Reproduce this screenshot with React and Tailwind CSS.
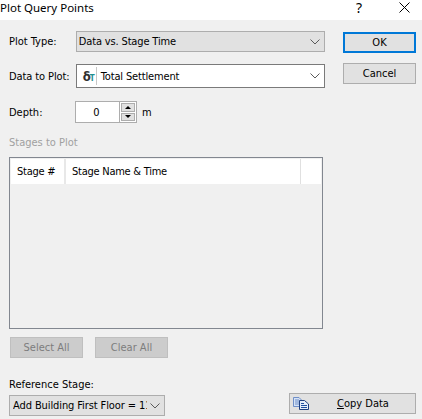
const sans = '"DejaVu Sans", "Noto Sans", sans-serif';
const title = '"Noto Sans", sans-serif';

function Chevron() {
  return (
    <svg width="10" height="6" viewBox="0 0 10 6" className="shrink-0">
      <path d="M0.5 0.5 L5 5 L9.5 0.5" fill="none" stroke="#5a5a5a" strokeWidth="1" />
    </svg>
  );
}

function Button({ children, className }) {
  return <div className={`flex items-center justify-center ${className}`}>{children}</div>;
}

function CopyIcon() {
  return (
    <svg width="16" height="13" viewBox="0 0 16 13" className="shrink-0">
      <path d="M0.5 0.5 H6 L8.5 3 V9.5 H0.5 Z" fill="#d5e2f6" stroke="#6f8fc8" />
      <path d="M2 3 H6 M2 5 H7 M2 7 H7" stroke="#6f8fc8" />
      <path d="M6.5 3.5 H11.5 L15.5 7 V12.5 H6.5 Z" fill="#e4edfa" stroke="#1f3f7f" />
      <path d="M8 6.5 H11 M8 8.5 H14 M8 10.5 H14" stroke="#1f4f9f" />
    </svg>
  );
}

export default function App() {
  return (
    <div className="w-[422px] h-[419px] overflow-hidden bg-[#f0f0f0] flex flex-col text-[11px] leading-[13px] font-stretch-condensed text-black" style={{ fontFamily: sans }}>
      <div className="h-5 bg-white flex items-start justify-between shrink-0">
        <span className="text-[11.5px] leading-[16px] font-stretch-normal" style={{ fontFamily: title }}>Plot Query Points</span>
        <div className="flex items-start">
          <span className="text-[14px] leading-[20px] -mt-[2px] mr-[37px] font-stretch-normal" style={{ fontFamily: title }}>?</span>
          <svg width="11" height="11" viewBox="0 0 11 11" className="mt-[2px] mr-[12px]">
            <path d="M0.5 0.5 L10.5 10.5 M10.5 0.5 L0.5 10.5" stroke="#000" strokeWidth="1" />
          </svg>
        </div>
      </div>

      <div className="flex-1 flex flex-col pl-[9px] pr-[6px]">
        <div className="flex">
          <div className="w-[316px] flex flex-col">
            <div className="flex items-center mt-[11px]">
              <span className="w-[67px]">Plot Type:</span>
              <div className="w-[250px] h-[21px] bg-[#e1e1e1] border border-[#adadad] flex items-center justify-between pl-[2px] pr-[4px]">
                <span className="tracking-[-0.15px]">Data vs. Stage Time</span>
                <Chevron />
              </div>
            </div>
            <div className="flex items-center mt-[12px]">
              <span className="w-[67px] whitespace-nowrap tracking-[-0.1px]">Data to Plot:</span>
              <div className="w-[250px] h-[24px] bg-white border border-[#7a7a7a] flex items-center justify-between pl-[6px] pr-[4px]">
                <div className="flex items-center">
                  <span className="text-[13px] font-bold text-[#303030] w-[7px]">δ</span>
                  <span className="text-[8px] font-bold text-[#1f8f8f] mt-[4px] w-[6px]">T</span>
                  <span className="w-px h-[18px] bg-[#c8c8c8] mr-[4px]" />
                  <span className="tracking-[-0.15px]">Total Settlement</span>
                </div>
                <Chevron />
              </div>
            </div>
            <div className="flex items-center mt-[13px]">
              <span className="w-[66px]">Depth:</span>
              <div className="w-[45px] h-[22px] bg-white border border-[#adadad] flex items-center justify-center pr-[2px]">0</div>
              <div className="w-[17px] h-[22px] border border-[#adadad] border-l-0 flex flex-col bg-white p-[1px] gap-[1px]">
                <div className="flex-1 bg-[#e1e1e1] border border-[#adadad] flex items-center justify-center">
                  <span className="w-0 h-0 border-x-[3px] border-x-transparent border-b-[3px] border-b-black" />
                </div>
                <div className="flex-1 bg-[#e1e1e1] border border-[#adadad] flex items-center justify-center">
                  <span className="w-0 h-0 border-x-[3px] border-x-transparent border-t-[3px] border-t-black" />
                </div>
              </div>
              <span className="ml-[5px]">m</span>
            </div>
          </div>
          <div className="ml-[18px] flex flex-col">
            <Button className="w-[73px] h-[21px] mt-[12px] bg-[#e1e1e1] border-2 border-[#0078d7]">OK</Button>
            <Button className="w-[73px] h-[21px] mt-[10px] bg-[#e1e1e1] border border-[#adadad]">Cancel</Button>
          </div>
        </div>

        <div className="mt-[13px] text-[#a0a0a0]">Stages to Plot</div>

        <div className="mt-[8px] w-[314px] h-[172px] border border-[#828790] p-[1px] flex flex-col">
          <div className="h-[25px] bg-white flex items-center tracking-[-0.25px]">
            <span className="w-[55px] pl-[6px] border-r-2 border-[#e8e8e8] h-full flex items-center">Stage #</span>
            <span className="flex-1 pl-[6px] border-r border-[#e0e0e0] h-full flex items-center">Stage Name &amp; Time</span>
            <span className="w-[20px]" />
          </div>
        </div>

        <div className="flex mt-[8px] ml-[1px] gap-[12px]">
          <Button className="w-[73px] h-[21px] bg-[#cccccc] border border-[#bfbfbf] text-[#7d7d7d]">Select All</Button>
          <Button className="w-[73px] h-[21px] bg-[#cccccc] border border-[#bfbfbf] text-[#7d7d7d]">Clear All</Button>
        </div>

        <div className="flex items-end justify-between mt-[20px]">
          <div className="flex flex-col">
            <span className="mb-[4px]">Reference Stage:</span>
            <div className="w-[156px] h-[21px] bg-[#e1e1e1] border border-[#adadad] flex items-center justify-between pl-[3px] pr-[4px]">
              <span className="w-[134px] overflow-hidden whitespace-nowrap tracking-[-0.1px]">Add Building First Floor = 11</span>
              <Chevron />
            </div>
          </div>
          <div className="w-[127px] h-[21px] mb-[2px] bg-[#e1e1e1] border border-[#adadad] flex items-center pl-[3px]">
            <CopyIcon />
            <span className="ml-[28px]"><span className="underline">C</span>opy Data</span>
          </div>
        </div>
      </div>
    </div>
  );
}
